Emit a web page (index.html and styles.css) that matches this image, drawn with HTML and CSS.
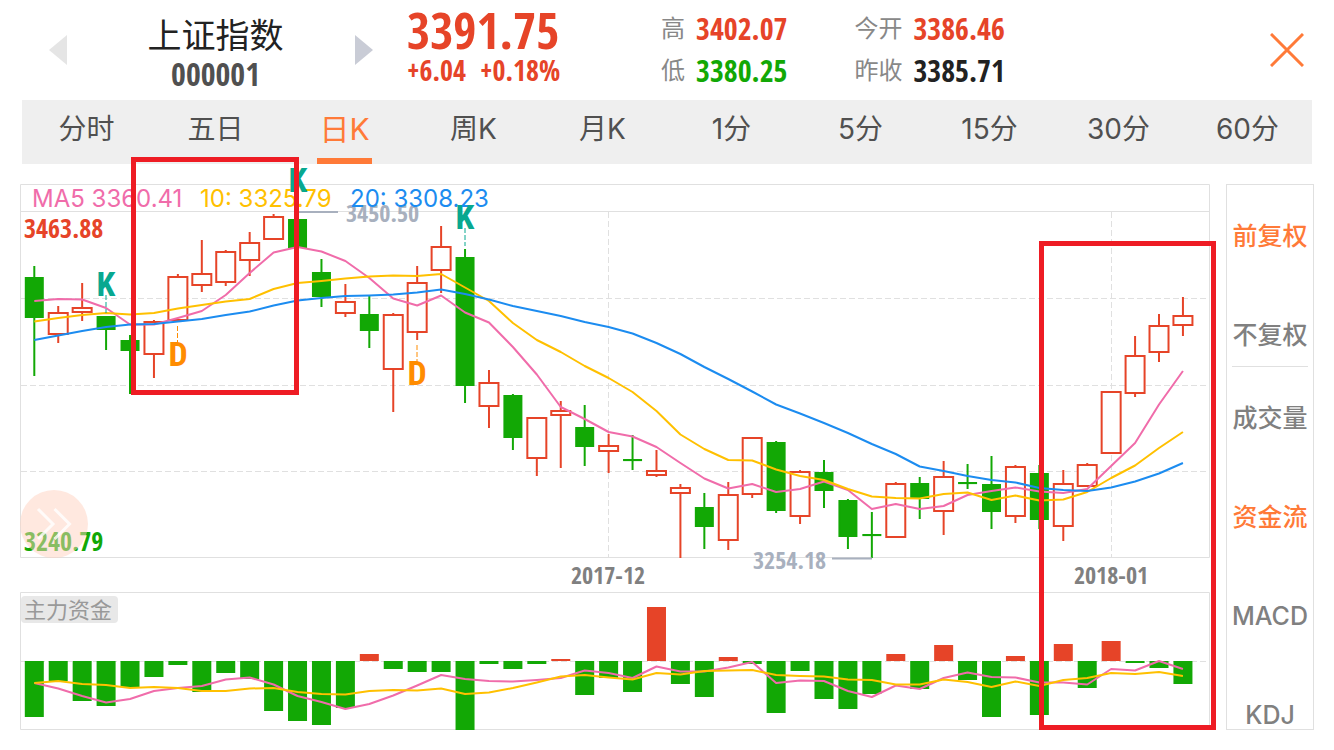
FILE: index.html
```html
<!DOCTYPE html>
<html lang="zh-CN">
<head>
<meta charset="utf-8">
<meta name="viewport" content="width=device-width, initial-scale=1">
<title>上证指数 000001</title>
<link rel="stylesheet" href="styles.css">
</head>
<body>
<header class="header">
  <div class="picker">
    <button class="icon-button" type="button" aria-label="上一个"><svg class="arrow arrow-off" viewBox="0 0 18 30"><path d="M18 0v30L0 15z"/></svg></button>
    <div class="name">
      <h1 class="title">上证指数</h1>
      <div class="code">000001</div>
    </div>
    <button class="icon-button" type="button" aria-label="下一个"><svg class="arrow" viewBox="0 0 18 30"><path d="M0 0v30l18-15z"/></svg></button>
  </div>
  <div class="quote">
    <div class="price">3391.75</div>
    <div class="change"><span>+6.04</span><span>+0.18%</span></div>
  </div>
  <dl class="stats">
    <dt>高</dt><dd class="up">3402.07</dd>
    <dt class="second">今开</dt><dd class="up">3386.46</dd>
    <dt>低</dt><dd class="down">3380.25</dd>
    <dt class="second">昨收</dt><dd>3385.71</dd>
  </dl>
  <button class="icon-button close" type="button" aria-label="关闭"><svg class="cross" viewBox="0 0 34 34"><path d="M1 1l32 32M33 1l-32 32"/></svg></button>
</header>

<nav class="tabs">
  <button class="tab" type="button">分时</button>
  <button class="tab" type="button">五日</button>
  <button class="tab active" type="button">日K</button>
  <button class="tab" type="button">周K</button>
  <button class="tab" type="button">月K</button>
  <button class="tab" type="button">1分</button>
  <button class="tab" type="button">5分</button>
  <button class="tab" type="button">15分</button>
  <button class="tab" type="button">30分</button>
  <button class="tab" type="button">60分</button>
</nav>

<main class="main">
  <svg class="chart" viewBox="20 184 1190 546" role="img" aria-label="日K线图与主力资金">
    <g class="frame">
      <path d="M20.500 184.500h1189v373h-1189zM20.500 211.500h1189M20.500 592.500h1189v137h-1189z"/>
      <path class="dashed" d="M21 298.500h1188M21 385.500h1188M21 471.500h1188M21 661.500h1188M608.500 212v345M1111.500 212v345"/>
    </g>
    <g id="candles"></g>
    <g id="flow"></g>
    <g id="averages"></g>

    <g class="extreme">
      <path d="M298 212h40M832 558.500h40"/>
      <text x="346" y="222">3450.50</text>
      <text x="753" y="569">3254.18</text>
    </g>
    <text class="legend pink" x="32" y="207">MA5 3360.41</text>
    <text class="legend yellow" x="200" y="207">10: 3325.79</text>
    <text class="legend blue" x="350" y="207">20: 3308.23</text>
    <text class="scale up" x="24" y="238">3463.88</text>
    <text class="scale down" x="24" y="551">3240.79</text>
    <text class="date" x="608" y="584">2017-12</text>
    <text class="date" x="1111" y="584">2018-01</text>

    <g class="mark sell">
      <text x="106" y="296">K</text><path d="M106 295v18"/>
      <text x="298" y="192">K</text>
      <text x="465" y="229">K</text><path d="M465 228v18"/>
    </g>
    <g class="mark buy">
      <path d="M177.500 326v17"/><text x="178" y="366">D</text>
      <path d="M417 345v17"/><text x="417" y="385">D</text>
    </g>

    <g class="expand">
      <circle cx="54" cy="524" r="34"/>
      <path d="M38 509l15 15-15 15M54.500 509l15 15-15 15"/>
    </g>
    <rect class="tag" x="21" y="596" width="97" height="27" rx="4"/>
    <text class="tag-text" x="24" y="618">主力资金</text>

    <rect class="highlight" x="133.500" y="159.500" width="163" height="233"/>
    <rect class="highlight" x="1041.500" y="243.500" width="172" height="484"/>
  </svg>

  <aside class="side">
    <div class="group">
      <button class="option active" type="button">前复权</button>
      <button class="option" type="button">不复权</button>
    </div>
    <div class="group">
      <button class="option" type="button">成交量</button>
      <button class="option active" type="button">资金流</button>
      <button class="option" type="button">MACD</button>
      <button class="option" type="button">KDJ</button>
    </div>
  </aside>
</main>
<script src="chart.js"></script>
</body>
</html>
```
FILE: styles.css
```css
* { box-sizing: border-box; }

body {
  margin: 0;
  background: #fff;
  color: #222;
  font-family: Inter, "Noto Sans CJK SC", sans-serif;
}

button {
  margin: 0;
  padding: 0;
  border: 0;
  background: none;
  font: inherit;
  color: inherit;
  cursor: pointer;
}

.up { color: #e64428; fill: #e64428; }
.down { color: #12a805; fill: #12a805; }

.header {
  display: flex;
  align-items: center;
  height: 100px;
  padding: 0 30px 0 49px;
}

.picker {
  display: flex;
  align-items: center;
  justify-content: space-between;
  width: 324px;
  margin-right: 34px;
}

.icon-button { display: block; line-height: 0; }
.arrow { width: 18px; height: 30px; fill: #c9ccd6; }
.arrow-off { fill: #e5e5e5; }

.name { padding: 6px 0 0 9px; text-align: center; }

.title {
  margin: 0;
  font-size: 34px;
  font-weight: 400;
  line-height: 42px;
}

.code, .quote, .stats dd, .scale, .date, .extreme {
  font-family: "Open Sans Condensed", "Roboto Condensed", sans-serif;
  font-weight: 700;
}

.code { font-size: 32px; line-height: 34px; color: #505050; }

.quote { width: 254px; padding-bottom: 8px; color: #e64428; white-space: nowrap; }
.price { font-size: 50px; line-height: 48px; }
.change { display: flex; gap: 14px; font-size: 28px; line-height: 32px; }

.stats {
  display: grid;
  grid-template-columns: auto auto auto auto;
  column-gap: 11px;
  margin: 0;
  line-height: 42px;
}

.stats dt { font-size: 24px; color: #888; }
.stats .second { padding-left: 56px; }
.stats dd { margin: 0; font-size: 30px; }

.close { margin-left: auto; }
.cross { width: 34px; height: 34px; fill: none; stroke: #ff7a38; stroke-width: 3; }

.tabs {
  display: grid;
  grid-template-columns: repeat(10, 1fr);
  height: 64px;
  margin: 0 22px;
  background: #efefef;
}

.tab {
  justify-self: center;
  border-bottom: 6px solid transparent;
  font-size: 28px;
  line-height: 58px;
  color: #505050;
}

.tab.active { padding: 0 2px; border-color: #ff7a38; font-size: 30px; color: #ff7a38; }

.main {
  display: flex;
  align-items: flex-start;
  gap: 16px;
  padding: 20px;
}

.chart { flex: 1; min-width: 0; overflow: visible; }

.frame path { fill: none; stroke: #e0e0e0; }
.frame .dashed { stroke-dasharray: 6 3; }

.rise { fill: #fff; stroke: #e64428; stroke-width: 2; }
.fall { fill: #12a805; stroke: #12a805; stroke-width: 2; }
.bar-rise { fill: #e64428; }
.bar-fall { fill: #12a805; }

.line { fill: none; stroke-width: 2; stroke-linejoin: round; }
.line.pink { stroke: #f06caa; }
.line.yellow { stroke: #ffc000; }
.line.blue { stroke: #1c8cf0; }

.legend { font-size: 24px; font-weight: 400; }
.legend.pink { fill: #f06caa; }
.legend.yellow { fill: #ffc000; }
.legend.blue { fill: #1c8cf0; }

.extreme { font-size: 24px; fill: #a8b0be; }
.extreme path { stroke: #a8b0be; stroke-width: 2; }
.scale { font-size: 26px; }
.date { font-size: 24px; fill: #808080; text-anchor: middle; }

.mark { font-family: "Roboto Condensed", Roboto, sans-serif; font-size: 34px; font-weight: 700; text-anchor: middle; }
.mark path { stroke-dasharray: 5 2; }
.sell { fill: #08a890; }
.sell path { stroke: #08a890; }
.buy { fill: #ff8c00; }
.buy path { stroke: #ff8c00; }

.expand circle { fill: #ffd2c0; fill-opacity: 0.5; }
.expand path { fill: none; stroke: #fff; stroke-opacity: 0.8; stroke-width: 3; }

.tag { fill: #e8e8e8; }
.tag-text { font-size: 22px; fill: #999; }

.highlight { fill: none; stroke: #ee1c24; stroke-width: 5; }

.side {
  width: 88px;
  border: 1px solid #e0e0e0;
  color: #808080;
}

.group {
  display: flex;
  flex-direction: column;
  gap: 69px;
  margin: 0 5px;
  padding-top: 36px;
}

.group:first-child { padding-bottom: 16px; border-bottom: 1px solid #e0e0e0; }
.group:last-child { height: 362px; }

.option { font-size: 25px; font-weight: 500; line-height: 30px; white-space: nowrap; }
.option.active { color: #ff7a38; }
```
FILE: chart.js
```js
const NS = "http://www.w3.org/2000/svg";
const FIRST = 34.3;
const STEP = 23.93;
const BASELINE = 661;

const x = i => FIRST + i * STEP;

function draw(parent, tag, attrs) {
  const el = document.createElementNS(NS, tag);
  for (const key in attrs) el.setAttribute(key, attrs[key]);
  document.getElementById(parent).appendChild(el);
}

// kind, high, body top, body bottom, low
const candles = [
  ["fall", 266, 277, 318, 376], ["rise", 306, 312, 335, 343], ["rise", 283, 307, 313, 321],
  ["fall", 316, 316, 330, 350], ["fall", 335, 340, 351, 394], ["rise", 320, 321, 355, 378],
  ["rise", 274, 276, 321, 321], ["rise", 240, 273, 286, 292], ["rise", 250, 251, 283, 286],
  ["rise", 232, 242, 261, 276], ["rise", 214, 216, 240, 240], ["fall", 219, 219, 248, 248],
  ["fall", 259, 272, 297, 307], ["rise", 284, 301, 314, 317], ["fall", 296, 314, 331, 348],
  ["rise", 313, 314, 370, 412], ["rise", 266, 282, 333, 340], ["rise", 226, 246, 271, 293],
  ["fall", 249, 257, 386, 403], ["rise", 370, 382, 407, 428], ["fall", 394, 395, 438, 450],
  ["rise", 417, 417, 459, 476], ["rise", 401, 410, 416, 468], ["fall", 405, 427, 447, 466],
  ["rise", 434, 445, 452, 473], ["fall", 435, 459, 461, 470], ["rise", 450, 470, 476, 477],
  ["rise", 484, 487, 494, 558], ["fall", 493, 507, 527, 549], ["rise", 482, 494, 541, 550],
  ["rise", 437, 437, 495, 498], ["fall", 441, 442, 511, 513], ["rise", 470, 471, 517, 524],
  ["fall", 460, 472, 491, 508], ["fall", 499, 500, 537, 549], ["fall", 512, 534, 536, 558],
  ["rise", 482, 483, 538, 538], ["fall", 477, 483, 499, 519], ["rise", 461, 476, 512, 535],
  ["fall", 464, 482, 484, 489], ["fall", 456, 484, 512, 529], ["rise", 465, 466, 517, 523],
  ["fall", 465, 473, 520, 529], ["rise", 470, 483, 527, 541], ["rise", 463, 464, 487, 487],
  ["rise", 391, 391, 454, 454], ["rise", 336, 355, 394, 397], ["rise", 314, 325, 353, 362],
  ["rise", 297, 315, 326, 336]
];

const flow = [
  717, 681, 701, 706, 687, 677, 665, 692, 673, 679, 711, 721, 725, 708, 654, 669, 672, 672, 730,
  664, 669, 664, 659, 695, 678, 692, 607, 684, 697, 657, 664, 713, 671, 699, 709, 694, 654, 689,
  645, 680, 717, 656, 715, 644, 688, 641, 663, 668, 684
];

const lines = {
  "pink": [
    [301, 299, 299.5, 308, 324.5, 324.5, 318, 311, 295, 273, 252.5, 247, 251.5, 261, 278, 298.5,
      305.5, 295.5, 312.5, 322.5, 347, 374.5, 407, 419, 432, 436.5, 447, 463, 478.5, 488.5, 484,
      492, 489, 481.5, 490, 509, 504, 509, 506, 495, 491, 487.5, 491.5, 493, 489, 466, 443, 404.5, 371],
    [683, 688.5, 696, 702.5, 699, 691, 688, 686, 679.5, 677.5, 684.5, 696, 702, 709, 704, 695.5,
      685.5, 675, 679, 681, 681.5, 680, 678, 670.5, 673, 678, 666.5, 671.5, 671.5, 667.5, 662, 683,
      680.5, 681, 691, 697, 685.5, 689, 678, 672.5, 677, 677.5, 682.5, 682.5, 684.5, 669, 670.5, 661, 669]
  ],
  "yellow": [
    [321.5, 318, 315, 313, 314.5, 313, 308.5, 305, 301.5, 299, 289, 283, 281, 278.5, 276.5, 275.5,
      276, 274, 287.5, 301, 323, 340, 352, 366, 378, 392, 411, 434.5, 449, 460, 460.5, 469.5, 476,
      480, 489, 496.5, 498, 498.5, 494, 492.5, 500, 495.5, 500.5, 499.5, 492, 478, 465.5, 448, 432],
    [683, 681, 684, 685, 688, 687, 688, 691, 691, 688.5, 688, 692, 694, 694.5, 691, 690, 690.5,
      688.5, 694, 692.5, 688, 682.5, 676.5, 675, 677.5, 679.5, 673, 674.5, 671, 670.5, 670, 675,
      676, 676.5, 679.5, 680, 684.5, 684.5, 679.5, 682, 687, 681.5, 686, 680, 678, 673, 674, 672, 676]
  ],
  "blue": [
    [340, 335.5, 331, 327, 324.5, 324, 321.5, 319, 315, 311.5, 305.5, 300.5, 298, 296, 295.5, 294.5,
      292.5, 289.5, 294, 299.5, 306, 311, 316, 322, 327, 333.5, 343, 354, 367, 379, 391.5, 404.5,
      413.5, 423, 433, 444, 454, 466.5, 471, 476, 480, 482.5, 488, 490, 491, 487.5, 481.5, 473.5, 463]
  ]
};

candles.forEach(([kind, high, top, bottom, low], i) => {
  draw("candles", "path", { class: kind, d: `M${x(i)} ${high}V${low}` });
  draw("candles", "rect", {
    class: kind, x: x(i) - (kind === "rise" ? 9.5 : 8.5), y: top + 1, width: kind === "rise" ? 19 : 17,
    height: Math.max(bottom - top - 2, 0.1)
  });
});

flow.forEach((end, i) => {
  draw("flow", "rect", {
    class: end < BASELINE ? "bar-rise" : "bar-fall", x: x(i) - 9.5,
    y: Math.min(end, BASELINE), width: 19, height: Math.abs(end - BASELINE)
  });
});

for (const color in lines) {
  lines[color].forEach(values => {
    draw("averages", "polyline", {
      class: `line ${color}`, points: values.map((y, i) => `${x(i)},${y}`).join(" ")
    });
  });
}
```
